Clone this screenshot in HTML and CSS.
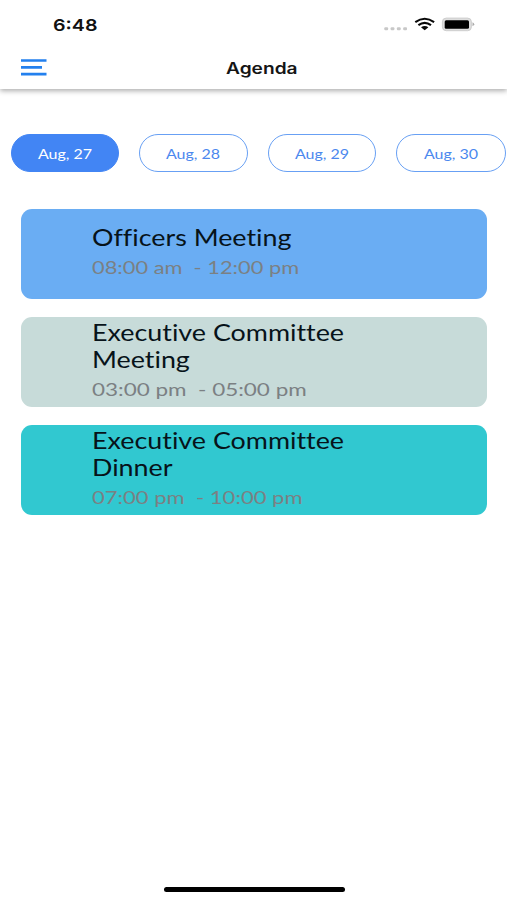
FILE: index.html
```html
<!DOCTYPE html>
<html lang="en">
<head>
<meta charset="utf-8">
<title>Agenda</title>
<link rel="stylesheet" href="styles.css">
</head>
<body>
<div class="screen">
  <header class="header">
    <div class="status">
      <span class="clock wide">6:48</span>
      <svg class="status-icons" width="92" height="18" viewBox="0 0 92 18">
        <g fill="#c8c8c8"><rect x="1.300" y="11.200" width="3.800" height="3" rx="1"/><rect x="7.600" y="11.200" width="3.800" height="3" rx="1"/><rect x="13.900" y="11.200" width="3.800" height="3" rx="1"/><rect x="20.200" y="11.200" width="3.800" height="3" rx="1"/></g>
        <g fill="none" stroke="#080808" stroke-width="2.100"><path d="M32.300 6.100Q41.700-.7 51.100 6.100"/><path d="M35.400 9.200Q41.700 4.500 48 9.200"/></g>
        <path d="M38 11.200Q41.700 8.600 45.400 11.200L41.700 14.300Z" fill="#080808"/>
        <rect x="59.400" y="2.100" width="29" height="12.600" rx="3.800" fill="#dedede" stroke="#cdcdcd"/>
        <rect x="61.700" y="4.200" width="24.300" height="8.500" rx="1.500" fill="#000"/>
        <path d="M89.500 6.300Q93 8.300 89.500 10.300Z" fill="#aaa"/>
      </svg>
    </div>
    <nav class="bar">
      <svg class="menu" width="26" height="18" viewBox="0 0 26 18" stroke="#2380ee" stroke-width="2.700"><path d="M0 1.500H25.500M0 8.300H21M0 15.200H25.500"/></svg>
      <h1 class="heading wide">Agenda</h1>
    </nav>
  </header>
  <div class="dates">
    <button class="date active"><span class="wide">Aug, 27</span></button>
    <button class="date"><span class="wide">Aug, 28</span></button>
    <button class="date"><span class="wide">Aug, 29</span></button>
    <button class="date"><span class="wide">Aug, 30</span></button>
  </div>
  <main class="events">
    <article class="event blue">
      <h2 class="title wide">Officers Meeting</h2>
      <p class="time wide">08:00 am  - 12:00 pm</p>
    </article>
    <article class="event sage">
      <h2 class="title wide">Executive Committee<br>Meeting</h2>
      <p class="time wide">03:00 pm  - 05:00 pm</p>
    </article>
    <article class="event teal">
      <h2 class="title wide">Executive Committee<br>Dinner</h2>
      <p class="time wide">07:00 pm  - 10:00 pm</p>
    </article>
  </main>
  <footer class="home"></footer>
</div>
</body>
</html>
```
FILE: styles.css
```css
* { box-sizing: border-box; }
body { margin: 0; background: #fff; font-family: Lato, sans-serif; }
h1, h2, p { margin: 0; font-weight: 400; }
.screen { height: 900px; display: flex; flex-direction: column; overflow: hidden; }
.wide { display: inline-block; white-space: pre; transform-origin: left center; }
.header { height: 89px; background: #fff; box-shadow: 0 2px 5px rgba(0, 0, 0, .32); }
.status { height: 48px; padding: 1px 32px 0 53px; display: flex; align-items: center; justify-content: space-between; }
.clock { font: 600 16.500px/20px Inter, sans-serif; color: #111; transform: scaleX(1.190); }
.bar { height: 39px; padding: 0 21px; display: grid; grid-template-columns: 205px 1fr; align-items: center; }
.heading { padding-top: 2px; font: 600 15.500px/20px Inter, sans-serif; color: #151515; transform: scaleX(1.235); }
.dates { display: flex; gap: 20px; padding: 45px 0 0 11px; }
.date { flex: none; width: 108.450px; height: 38px; padding: 1px 1px 0 0; border: 1px solid #68a0f4; border-radius: 19px; background: #fff; color: #4b88ee; font: 400 13px/20px Lato, sans-serif; }
.date:last-child { width: 109.500px; }
.date .wide { transform: scaleX(1.230); transform-origin: center; }
.date.active { background: #4285f4; border-color: #4285f4; color: #fff; }
.events { display: flex; flex-direction: column; gap: 18px; padding: 36.600px 20px 0 21px; }
.event { height: 90px; padding-left: 70.500px; border-radius: 11px; display: flex; flex-direction: column; align-items: flex-start; justify-content: center; }
.blue { background: #6aadf3; }
.sage { background: #c7dbd9; }
.teal { background: #31c8d0; }
.sage, .teal { padding-top: 2px; }
.title { margin: -3px 0 3px; font-size: 23px; line-height: 27px; font-variant-ligatures: none; color: #07131a; transform: scaleX(1.168); }
.time { font-size: 18px; line-height: 27px; color: #7b8083; transform: scaleX(1.212); }
.sage .time { transform: scaleX(1.248); }
.teal .time { transform: scaleX(1.224); }
.home { width: 181px; height: 5px; margin: auto auto 8px 163.500px; border-radius: 3px; background: #000; }
```
